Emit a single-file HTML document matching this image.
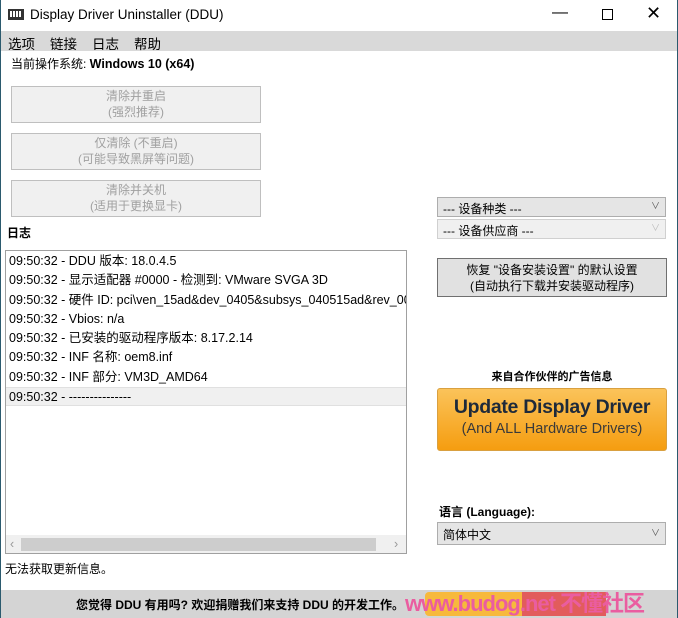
<!DOCTYPE html>
<html><head><meta charset="utf-8"><style>
*{margin:0;padding:0;box-sizing:border-box}
body{width:678px;height:618px;position:relative;overflow:hidden;background:#fff;font-family:"Liberation Sans","Noto Sans CJK SC",sans-serif;font-size:12px;color:#000}
.a{position:absolute;white-space:nowrap}
.btn{position:absolute;border:1px solid #bfbfbf;background:#f0f0f0;color:#a0a0a0;text-align:center;line-height:16px;padding-top:1px}
.log div{height:19.3px;line-height:19px;padding-left:3px;font-size:12.5px}
</style></head><body>
<div class="a" style="left:0;top:0;width:1px;height:618px;background:#2b5a6e"></div>
<div class="a" style="right:0;top:0;width:1px;height:618px;background:#2b5a6e"></div>
<svg class="a" style="left:8px;top:8px" width="16" height="14"><rect x="0" y="1" width="16" height="11" fill="#333"/><rect x="2" y="3" width="2" height="6" fill="#fff"/><rect x="5" y="3" width="2" height="6" fill="#fff"/><rect x="8" y="3" width="2" height="6" fill="#fff"/><rect x="11" y="3" width="2" height="6" fill="#fff"/></svg>
<div class="a" style="left:30px;top:7px;font-size:13.5px">Display Driver Uninstaller (DDU)</div>
<div class="a" style="left:552px;top:4px;font-size:16px">&#8212;</div>
<div class="a" style="left:602px;top:9px;width:11px;height:11px;border:1px solid #000"></div>
<div class="a" style="left:646px;top:3px;font-size:18px">&#10005;</div>
<div class="a" style="left:1px;top:31px;width:676px;height:20px;background:#d9d9d9"></div>
<div class="a" style="left:8px;top:33px;font-size:13.5px">选项</div>
<div class="a" style="left:50px;top:33px;font-size:13.5px">链接</div>
<div class="a" style="left:92px;top:33px;font-size:13.5px">日志</div>
<div class="a" style="left:134px;top:33px;font-size:13.5px">帮助</div>
<div class="a" style="left:11px;top:55px">当前操作系统: <b style="font-size:12.5px">Windows 10 (x64)</b></div>
<div class="btn" style="left:11px;top:86px;width:250px;height:37px">清除并重启<br>(强烈推荐)</div>
<div class="btn" style="left:11px;top:133px;width:250px;height:37px">仅清除 (不重启)<br>(可能导致黑屏等问题)</div>
<div class="btn" style="left:11px;top:180px;width:250px;height:37px">清除并关机<br>(适用于更换显卡)</div>
<div class="a" style="left:7px;top:224px;font-weight:bold">日志</div>
<div class="a log" style="left:5px;top:250px;width:402px;height:304px;border:1px solid #a0a0a0;overflow:hidden">
<div style="margin-top:1px">09:50:32 - DDU 版本: 18.0.4.5</div>
<div>09:50:32 - 显示适配器 #0000 - 检测到: VMware SVGA 3D</div>
<div>09:50:32 - 硬件 ID: pci\ven_15ad&amp;dev_0405&amp;subsys_040515ad&amp;rev_00</div>
<div>09:50:32 - Vbios: n/a</div>
<div>09:50:32 - 已安装的驱动程序版本: 8.17.2.14</div>
<div>09:50:32 - INF 名称: oem8.inf</div>
<div>09:50:32 - INF 部分: VM3D_AMD64</div>
<div style="background:#f0f0f0;border-top:1px solid #e0e0e0;border-bottom:1px solid #e0e0e0">09:50:32 - ---------------</div>
<div class="a" style="left:0;top:284px;width:400px;height:18px;background:#f0f0f0;padding:0"></div>
<div class="a" style="left:15px;top:287px;width:355px;height:13px;background:#cdcdcd;padding:0"></div>
<div class="a" style="left:4px;top:284px;color:#999;padding:0">&#8249;</div>
<div class="a" style="left:388px;top:284px;color:#999;padding:0">&#8250;</div>
</div>
<div class="a" style="left:437px;top:197px;width:229px;height:20px;border:1px solid #adadad;background:#e5e5e5;padding:2px 5px">--- 设备种类 ---<span style="position:absolute;right:5px;top:1px;font-size:9px;color:#555">&#8744;</span></div>
<div class="a" style="left:437px;top:219px;width:229px;height:20px;border:1px solid #d0d0d0;background:#f0f0f0;padding:2px 5px">--- 设备供应商 ---<span style="position:absolute;right:5px;top:1px;font-size:9px;color:#bbb">&#8744;</span></div>
<div class="btn" style="left:437px;top:258px;width:230px;height:39px;background:#e1e1e1;border-color:#707070;color:#000;padding-top:3px">恢复 "设备安装设置" 的默认设置<br>(自动执行下载并安装驱动程序)</div>
<div class="a" style="left:437px;top:368px;width:230px;text-align:center;font-weight:bold;font-size:11px">来自合作伙伴的广告信息</div>
<div class="a" style="left:437px;top:388px;width:230px;height:63px;border:1px solid #d9a040;border-radius:3px;background:linear-gradient(#fbc35a,#f59d10);text-align:center">
<div style="font-size:19.5px;font-weight:bold;color:#1e2a3a;margin-top:7px;letter-spacing:-0.3px">Update Display Driver</div>
<div style="font-size:14.5px;color:#3a3a3a;margin-top:2px">(And ALL Hardware Drivers)</div></div>
<div class="a" style="left:439px;top:503px;font-weight:bold">语言 (Language):</div>
<div class="a" style="left:437px;top:522px;width:229px;height:23px;border:1px solid #adadad;background:#e5e5e5;padding:3px 5px">简体中文<span style="position:absolute;right:5px;top:3px;font-size:9px;color:#555">&#8744;</span></div>
<div class="a" style="left:5px;top:560px">无法获取更新信息。</div>
<div class="a" style="left:1px;top:590px;width:676px;height:28px;background:#d4d4d4"></div>
<div class="a" style="left:76px;top:596px;font-weight:bold">您觉得 DDU 有用吗? 欢迎捐赠我们来支持 DDU 的开发工作。</div>
<div class="a" style="left:425px;top:592px;width:108px;height:24px;background:#f7b93c;border-radius:4px"></div>
<div class="a" style="left:522px;top:592px;width:84px;height:24px;background:#e25c5c"></div>
<div class="a" style="left:405px;top:586px;font-size:22px;font-weight:bold;color:#ea5da0;letter-spacing:-1px">www.budog.net 不懂社区</div>
</body></html>
